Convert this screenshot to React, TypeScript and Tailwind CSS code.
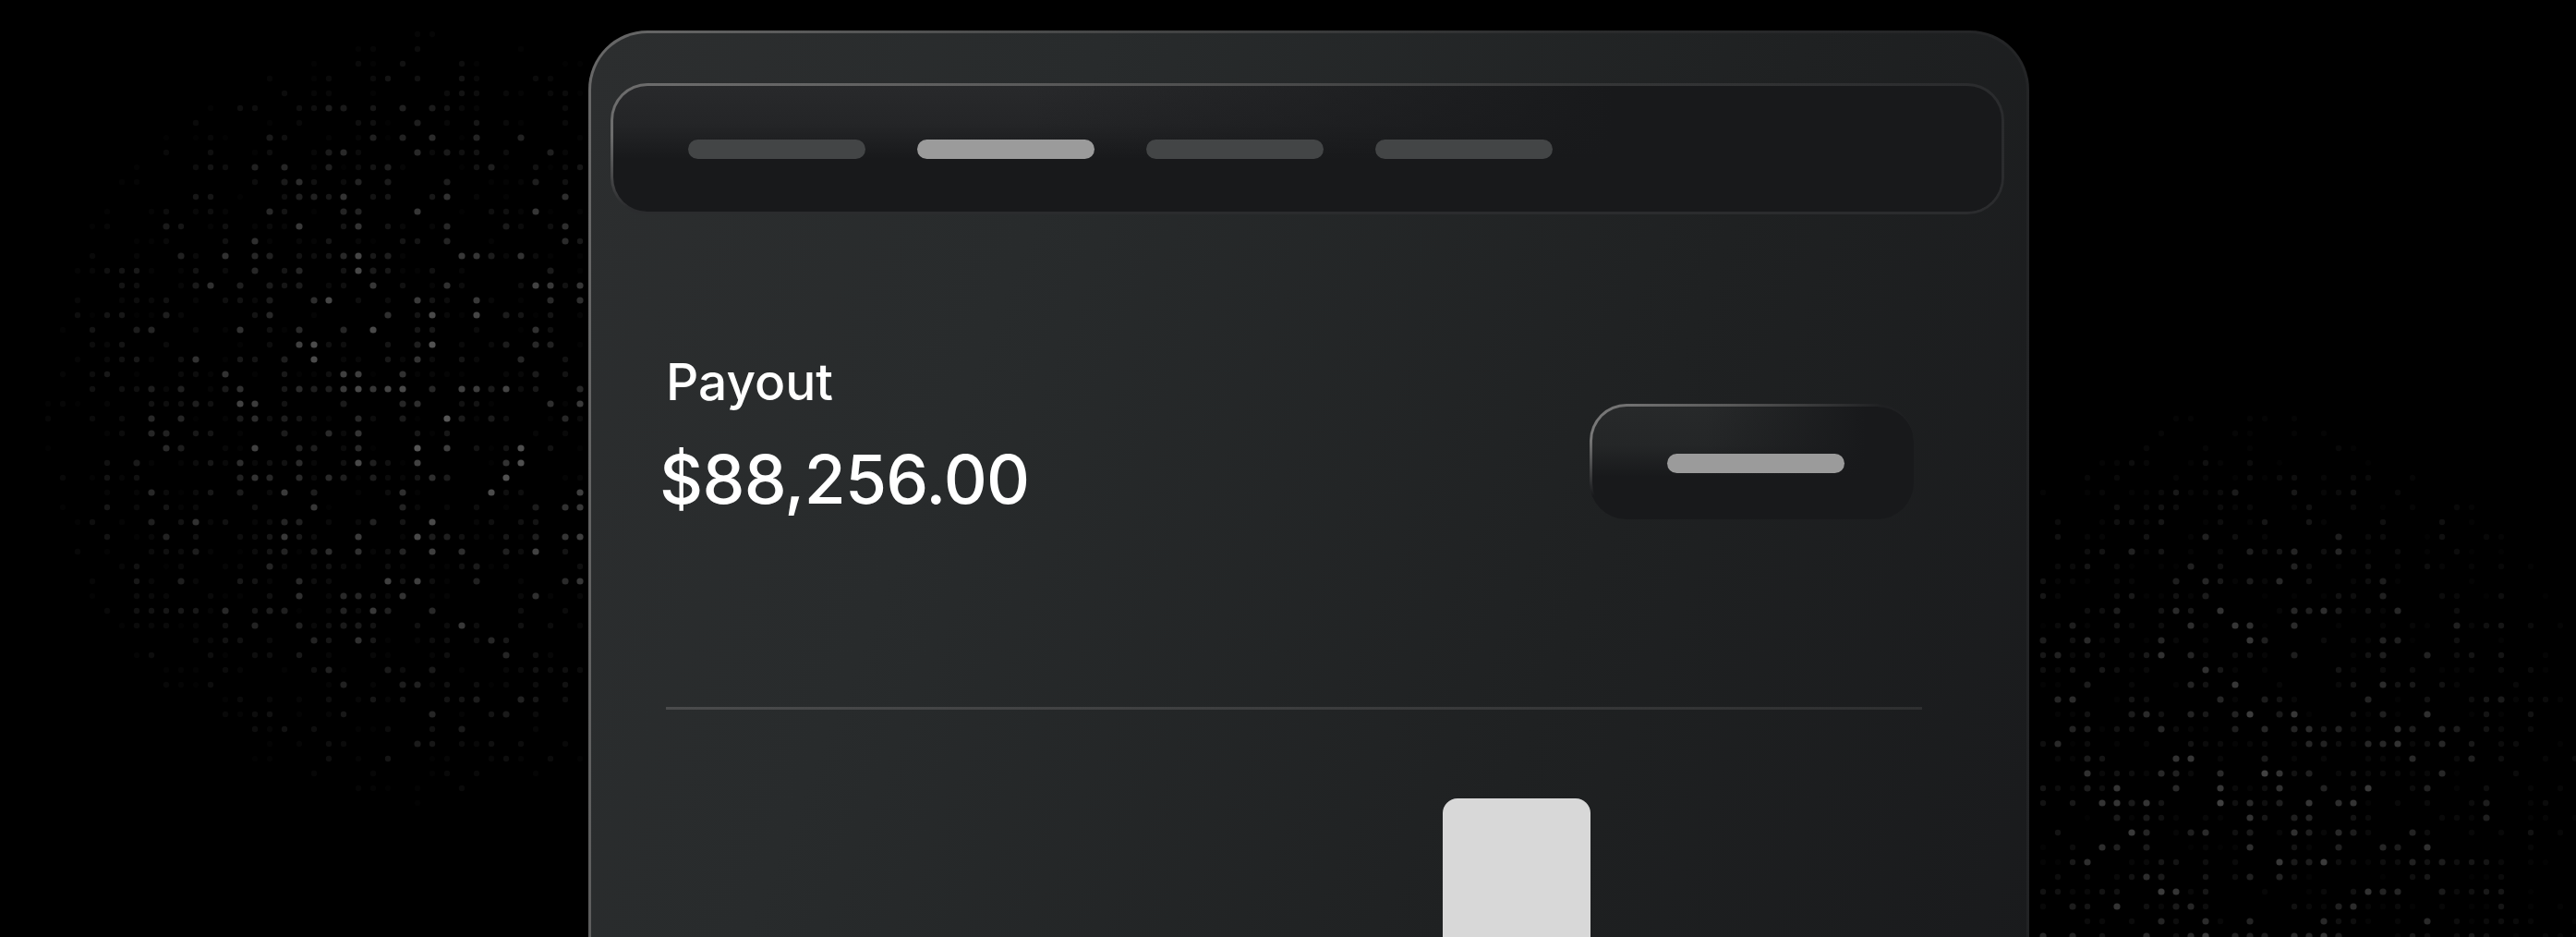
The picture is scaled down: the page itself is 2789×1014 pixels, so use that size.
import React from "react";

function rng(seed: number) {
  let s = seed;
  return () => {
    s = (s * 1664525 + 1013904223) % 4294967296;
    return s / 4294967296;
  };
}

type Dot = { x: number; y: number; o: number; r: number };

function blob(dots: Dot[], r: () => number, cx: number, cy: number, rx: number, ry: number, amp: number) {
  for (let y = 5; y < 1014; y += 16) {
    for (let x = 4; x < 2789; x += 16) {
      if (x > 628 && x < 2204) continue;
      const d = ((x - cx) / rx) ** 2 + ((y - cy) / ry) ** 2;
      const env = Math.max(0, 1 - d);
      if (env <= 0) continue;
      const v = r();
      const o = env * amp * v * v * v;
      if (o < 0.012) continue;
      dots.push({ x, y, o, r: o > 0.1 ? 3.6 : 3.2 });
    }
  }
}

const dots: Dot[] = [];
const rand = rng(7);
blob(dots, rand, 470, 450, 440, 430, 0.34);
blob(dots, rand, 2430, 860, 400, 430, 0.26);

function Pill({ active }: { active?: boolean }) {
  return <div className={active ? "h-[21px] w-[192px] rounded-full bg-[#9b9b9b]" : "h-[21px] w-[192px] rounded-full bg-[#434546]"} />;
}

export default function App() {
  return (
    <div className="relative h-[1014px] w-full overflow-hidden bg-black font-['Inter',sans-serif]">
      <svg className="absolute inset-0" width="2789" height="1014" aria-hidden="true">
        {dots.map((d, i) => (
          <circle key={i} cx={d.x} cy={d.y} r={d.r} fill="#ffffff" fillOpacity={d.o} />
        ))}
      </svg>
      <div className="relative ml-[637px] mt-[33px] h-[1100px] w-[1560px] rounded-t-[64px] border-x-[3px] border-t-[3px] border-transparent [background:linear-gradient(112deg,#2c2e2f_0%,#282b2c_28%,#1f2122_66%,#191a1c_100%)_padding-box,linear-gradient(100deg,#686868_0%,#4c4d4d_25%,#2a2b2c_62%,#212224_100%)_border-box] pl-[21px] pr-[24px] pt-[54px]">
        <div className="flex h-[142px] items-center gap-[56px] rounded-[40px] border-[3px] border-transparent [background:linear-gradient(90deg,#18191b00_0%,#18191b00_30%,#18191bff_72%)_padding-box,linear-gradient(180deg,#28292b_0%,#242527_30%,#18191b_58%,#18191b_100%)_padding-box,linear-gradient(180deg,#2b2c2e00_0%,#2b2c2e00_40%,#2b2c2e_95%)_border-box,linear-gradient(95deg,#6d6d6d_0%,#5a5a5a_30%,#353637_70%,#2a2b2d_100%)_border-box] pl-[81px]">
          <Pill />
          <Pill active />
          <Pill />
          <Pill />
        </div>
        <div className="flex items-start justify-between pl-[53px] pr-[98px] pt-[149px]">
          <div className="flex flex-col text-white">
            <div className="pl-[7px] text-[55px] font-medium leading-[64px]">Payout</div>
            <div className="mt-[34px] text-[73px] font-medium leading-[80px] tracking-[-0.01em]">$88,256.00</div>
          </div>
          <div className="mt-[56px] flex h-[125px] w-[351px] items-center justify-center rounded-[40px] border-l-[3px] border-t-[3px] border-transparent [background:linear-gradient(90deg,#18191b00_0%,#18191b00_35%,#18191bff_85%)_padding-box,linear-gradient(180deg,#27292a_0%,#242627_35%,#18191b_62%,#18191b_100%)_padding-box,linear-gradient(180deg,#18191b00_0%,#18191b00_30%,#18191b_80%)_border-box,linear-gradient(100deg,#7a7a7a_0%,#5a5a5a_40%,#1f2022_85%)_border-box] pl-[5px]">
            <div className="h-[21px] w-[192px] rounded-full bg-[#9b9b9b]" />
          </div>
        </div>
        <div className="ml-[60px] mt-[203px] h-[3px] w-[1360px] [background:linear-gradient(90deg,#4a4b4c,#2e2f30)]" />
        <div className="ml-[901px] mt-[96px] h-[400px] w-[160px] rounded-t-[16px] bg-[#d8d8d8]" />
      </div>
    </div>
  );
}
